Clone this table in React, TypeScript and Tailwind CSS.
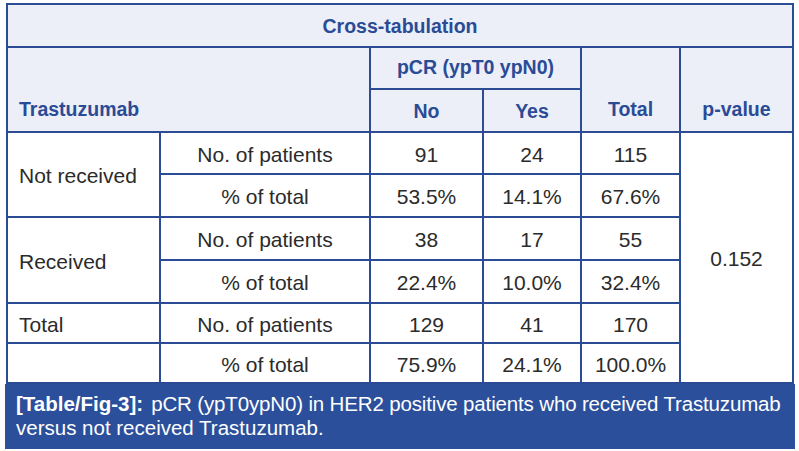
import React from "react";

const line = "border-[#2b4c94]";
const head = `border-r-2 border-b-2 ${line} bg-[#eceef8] text-[#2a4b95] font-bold text-[19.5px] p-0`;
const cell = `border-r-2 border-b-2 ${line} text-center align-middle p-0 pt-[3px]`;

const rows = [
  { group: "Not received", span: 2, label: "No. of patients", no: "91", yes: "24", total: "115" },
  { label: "% of total", no: "53.5%", yes: "14.1%", total: "67.6%" },
  { group: "Received", span: 2, label: "No. of patients", no: "38", yes: "17", total: "55" },
  { label: "% of total", no: "22.4%", yes: "10.0%", total: "32.4%" },
  { group: "Total", span: 1, label: "No. of patients", no: "129", yes: "41", total: "170" },
  { group: "", span: 1, label: "% of total", no: "75.9%", yes: "24.1%", total: "100.0%" },
];

const heights = ["h-[42px]", "h-[43px]", "h-[43px]", "h-[43px]", "h-[40px]", "h-[40px]"];

const App = () => {
  return (
    <div className="bg-white w-[799px] h-[451px] pt-[3px] pl-[5px] font-['Liberation_Sans',Arial,sans-serif]">
      <div className="w-[790px]">
        <table className={`ml-px w-[788px] table-fixed border-separate border-spacing-0 border-l-2 border-t-2 ${line} text-[21px] text-[#2b2b2b]`}>
          <colgroup>
            <col className="w-[153px]" />
            <col className="w-[210px]" />
            <col className="w-[113px]" />
            <col className="w-[98px]" />
            <col className="w-[99px]" />
            <col className="w-[113px]" />
          </colgroup>
          <thead>
            <tr className="h-[43px]">
              <th colSpan={6} className={`${head} text-center pt-[2px]`}>
                Cross-tabulation
              </th>
            </tr>
            <tr className="h-[42px]">
              <th colSpan={2} rowSpan={2} className={`${head} text-left align-bottom pl-[11px] pb-[7px]`}>
                Trastuzumab
              </th>
              <th colSpan={2} className={`${head} text-center`}>
                pCR (ypT0 ypN0)
              </th>
              <th rowSpan={2} className={`${head} text-center align-bottom pb-[7px]`}>
                Total
              </th>
              <th rowSpan={2} className={`${head} text-center align-bottom pb-[7px]`}>
                p-value
              </th>
            </tr>
            <tr className="h-[43px]">
              <th className={`${head} text-center pt-[2px]`}>No</th>
              <th className={`${head} text-center pt-[2px]`}>Yes</th>
            </tr>
          </thead>
          <tbody>
            {rows.map((r, i) => (
              <tr key={i} className={heights[i]}>
                {r.group !== undefined && (
                  <td rowSpan={r.span} className={`${cell} text-left pl-[11px]`}>
                    {r.group}
                  </td>
                )}
                <td className={cell}>{r.label}</td>
                <td className={cell}>{r.no}</td>
                <td className={cell}>{r.yes}</td>
                <td className={cell}>{r.total}</td>
                {i === 0 && (
                  <td rowSpan={6} className={cell}>
                    0.152
                  </td>
                )}
              </tr>
            ))}
          </tbody>
        </table>
        <div className="bg-[#2b4f9b] text-white text-[20.5px] leading-[24px] pt-[8px] pb-[9px] pl-[11px] pr-1 whitespace-nowrap">
          <span className="font-bold">[Table/Fig-3]:</span>
          <span className="ml-[8px] tracking-[-0.15px]">pCR (ypT0ypN0) in HER2 positive patients who received Trastuzumab</span>
          <br />
          versus not received Trastuzumab.
        </div>
      </div>
    </div>
  );
};

export default App;
